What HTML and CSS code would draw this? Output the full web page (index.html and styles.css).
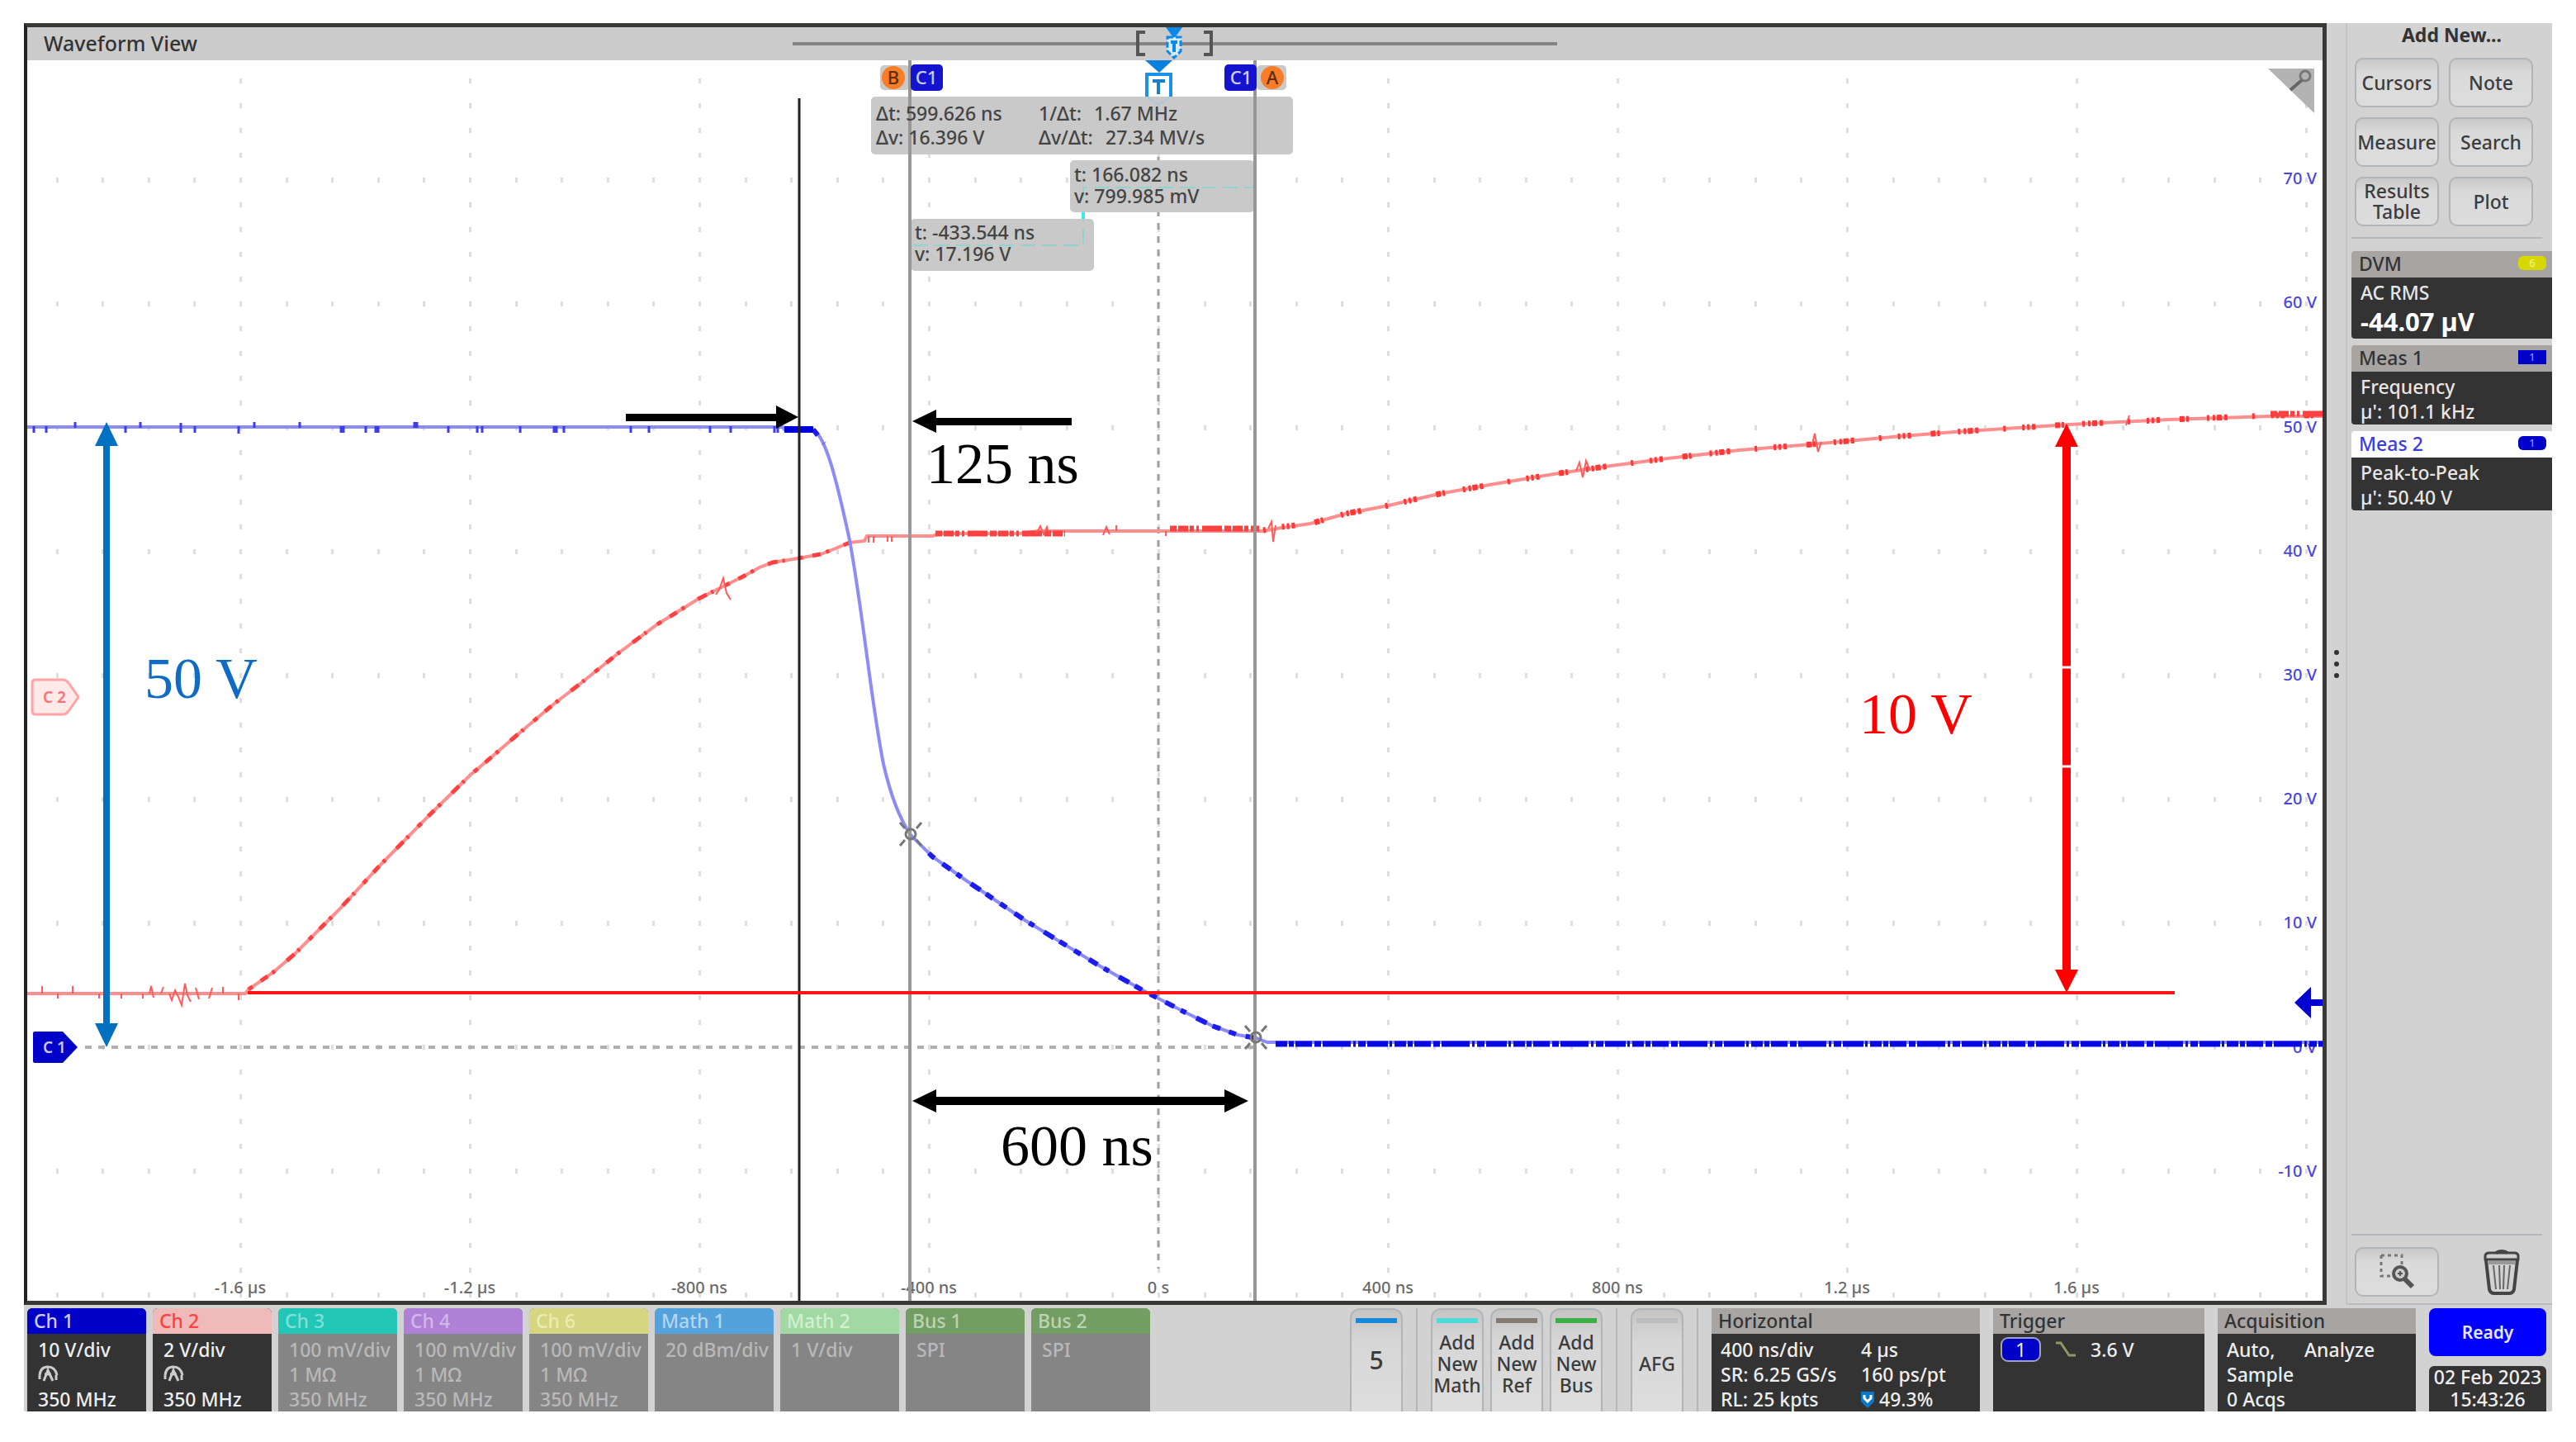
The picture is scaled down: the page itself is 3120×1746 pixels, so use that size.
FILE: index.html
```html
<!DOCTYPE html>
<html lang="en">
<head>
    <meta charset="UTF-8">
    <meta name="viewport" content="width=device-width, initial-scale=1.0">
    <title>Waveform View</title>
    <link rel="stylesheet" href="styles.css">
</head>
<body>
    <div class="scope">
        <div class="work">
            <!-- Waveform window -->
            <main class="wave">
                <div class="wave-title">
                    <span>Waveform View</span>
                    <svg class="overview" width="926" height="40" viewBox="960 33 926 40">
                        <path d="M960 53H1886" stroke="#848484" stroke-width="4"/>
                        <path d="M1387 39h-9v27h9M1458 39h9v27h-9" fill="none" stroke="#555" stroke-width="4"/>
                        <path d="M1412 33h20l-10 14z" fill="#0a8ae8"/>
                        <path d="M1414 45h16v17l-8 8-8-8z" fill="#d8ecf8" stroke="#0a8ae8" stroke-width="3" stroke-dasharray="7 3"/>
                        <path d="M1418 51h8M1422 51v12" stroke="#0a8ae8" stroke-width="4"/>
                    </svg>
                </div>
                <svg class="plot" viewBox="33 73 2780 1502">
                    <defs>
                        <pattern id="grid" x="286" y="62" width="278" height="150" patternUnits="userSpaceOnUse">
                            <g fill="#dedede">
                                <rect x="4" y="3" width="3" height="6"/>
                                <rect x="60" y="3" width="3" height="6"/>
                                <rect x="115" y="3" width="3" height="6"/>
                                <rect x="171" y="3" width="3" height="6"/>
                                <rect x="226" y="3" width="3" height="6"/>
                                <rect x="4" y="33" width="3" height="6"/>
                                <rect x="4" y="63" width="3" height="6"/>
                                <rect x="4" y="93" width="3" height="6"/>
                                <rect x="4" y="123" width="3" height="6"/>
                            </g>
                        </pattern>
                    </defs>
                    <rect x="33" y="90" width="2780" height="1485" fill="url(#grid)"/>
                    <path d="M1403 190V1536" stroke="#a0a0a0" stroke-width="3" stroke-dasharray="8 8"/>
                    <path d="M103 1268H1520" stroke="#b0b0b0" stroke-width="4" stroke-dasharray="8 8"/>

                    <!-- axis labels -->
                    <g class="volts">
                        <text x="2806" y="223">70 V</text>
                        <text x="2806" y="373">60 V</text>
                        <text x="2806" y="524">50 V</text>
                        <text x="2806" y="674">40 V</text>
                        <text x="2806" y="824">30 V</text>
                        <text x="2806" y="974">20 V</text>
                        <text x="2806" y="1124">10 V</text>
                        <text x="2806" y="1275">0 V</text>
                        <text x="2806" y="1425">-10 V</text>
                    </g>
                    <g class="times">
                        <text x="291" y="1566">-1.6 µs</text>
                        <text x="569" y="1566">-1.2 µs</text>
                        <text x="847" y="1566">-800 ns</text>
                        <text x="1125" y="1566">-400 ns</text>
                        <text x="1403" y="1566">0 s</text>
                        <text x="1681" y="1566">400 ns</text>
                        <text x="1959" y="1566">800 ns</text>
                        <text x="2237" y="1566">1.2 µs</text>
                        <text x="2515" y="1566">1.6 µs</text>
                    </g>

                    <!-- channel 2 trace -->
                    <path class="ch2" d="M33 1203H297L301 1198 330 1178 357 1155 411 1101 460 1048 520 987 569 939 596 916 625 891 670 853 700 830 750 790 796 756 846 725 876 710 900 698 920 687 936 681 967 676 994 671 1012 664 1029 657 1047 655 1050 649H1130L1136 646H1235L1257 643H1530L1552 639 1587 634 1630 622 1682 612 1743 598 1804 587 1882 574 1951 564 2020 555 2107 545 2194 538 2281 530 2367 523 2506 514 2628 508 2750 504H2813"/>
                    <path class="ch2-noise" d="M301 1198L330 1178 357 1155 411 1101 460 1048 520 987 569 939 596 916 625 891 670 853 700 830 750 790 796 756 846 725 876 710 900 698 920 687 936 681 967 676 994 671 1012 664 1029 657"/>
                    <path class="ch2-noise wide" d="M1530 642L1552 638 1587 634 1630 622 1682 612 1743 598 1804 587 1882 574 1951 564 2020 555 2107 545 2194 538 2281 530 2367 523 2506 514 2628 508 2750 503H2813"/>
                    <path class="ch2-noise flat" d="M1133 646H1290M1417 640H1525M2750 501H2813"/>
                    <path class="ch2-spikes" d="M51 1203v-9M70 1203v6M88 1203v-9M120 1203v6M147 1203v6M173 1203v6M181 1203l2-9 3 14M195 1203l3-8M205 1203l3 8 4-12 4 8 4 10 4-26 3 14 4 8M237 1196l4 14M253 1209l4-13M270 1203v-8M289 1203v8M867 720l4-6 5-14 4 18 5 8M1052 649v8M1058 649v8M1075 649v7M1080 649v7M1255 646l5-9 4 10 4-9 3 10M1336 648l4-10 4 9M1352 643v-7M1412 643v6M1536 640l4-8 2 24 3-20M1909 570l4-10 4 18 4-20 5 12M2194 541l4-16 4 22 4-12M2575 515l4-12"/>

                    <!-- channel 1 trace -->
                    <path class="ch1" d="M33 517H948L950 520H985C1000 530 1012 575 1029 654C1045 740 1055 850 1070 925C1078 960 1090 992 1103 1011L1129 1037 1170 1066 1241 1114 1331 1169 1384 1199 1430 1223 1468 1242 1499 1253 1522 1257 1535 1262H2813"/>
                    <path class="ch1-noise" d="M985 520L998 537M1125 1033L1129 1037 1170 1066 1241 1114 1331 1169 1384 1199 1430 1223 1468 1242 1499 1253 1522 1257"/>
                    <path d="M950 520h35" stroke="#00d" stroke-width="8"/>
                    <path class="ch1-base" d="M1545 1264H2813"/>
                    <path class="ch1-spikes" d="M41 516v8M56 516v8M91 518v-7M152 516v8M170 518v-7M219 512v12M236 516v8M289 516v9M308 518v-7M363 518v-7M413 516v8M416 516v8M443 516v8M455 516v8M458 516v8M502 518v-7M505 518v-7M543 516v8M578 516v8M584 516v8M630 516v8M671 516v8M674 516v8M683 516v8M764 516v8M786 516v8M860 516v8M885 516v8M938 516v8M942 516v8"/>

                    <!-- readouts -->
                    <g fill="#c9c9c9">
                        <rect x="1055" y="117" width="511" height="70" rx="5"/>
                        <rect x="1296" y="194" width="223" height="63" rx="5"/>
                        <rect x="1103" y="265" width="222" height="63" rx="5"/>
                        <rect x="1066" y="79" width="36" height="30" rx="5"/>
                        <rect x="1522" y="79" width="36" height="30" rx="5"/>
                    </g>
                    <path d="M1106 297H1312V266M1312 240V227H1518" fill="none" stroke="#92d2d0" stroke-width="2" stroke-dasharray="18 8"/>
                    <path d="M1312 257v8" stroke="#3ee8e8" stroke-width="4"/>
                    <path d="M1102 73V1575M1520 73V1575" stroke="#979797" stroke-width="4"/>
                    <g class="readout">
                        <text x="1061" y="146">Δt: 599.626 ns</text>
                        <text x="1061" y="175">Δv: 16.396 V</text>
                        <text x="1258" y="146">1/Δt:</text>
                        <text x="1325" y="146">1.67 MHz</text>
                        <text x="1258" y="175">Δv/Δt:</text>
                        <text x="1339" y="175">27.34 MV/s</text>
                        <text x="1301" y="220">t: 166.082 ns</text>
                        <text x="1301" y="246">v: 799.985 mV</text>
                        <text x="1108" y="290">t: -433.544 ns</text>
                        <text x="1108" y="316">v: 17.196 V</text>
                    </g>

                    <!-- cursors -->
                    <g class="mark">
                        <circle cx="1103" cy="1010" r="6"/>
                        <path d="M1090 996l6 7M1116 996l-6 7M1090 1024l6-7M1116 1024l-6-7"/>
                        <circle cx="1521" cy="1256" r="6"/>
                        <path d="M1508 1242l6 7M1534 1242l-6 7M1508 1270l6-7M1534 1270l-6-7"/>
                    </g>
                    <circle cx="1082" cy="94" r="14" fill="#f97d27"/>
                    <circle cx="1541" cy="94" r="14" fill="#f97d27"/>
                    <rect x="1103" y="78" width="39" height="32" rx="5" fill="#1414cf"/>
                    <rect x="1483" y="78" width="39" height="32" rx="5" fill="#1414cf"/>
                    <g class="tag">
                        <text x="1082" y="102" fill="#5a2c08">B</text>
                        <text x="1541" y="102" fill="#5a2c08">A</text>
                        <text x="1122" y="102" fill="#cfd0ff">C1</text>
                        <text x="1503" y="102" fill="#cfd0ff">C1</text>
                    </g>
                    <path d="M1387 73h33l-16 15z" fill="#0a7fdc"/>
                    <path d="M1389 117V90h29v27" fill="#fff" stroke="#1b92e6" stroke-width="4"/>
                    <path d="M1390 118l13 9 13-9" fill="none" stroke="#a9c8de" stroke-width="2"/>
                    <path d="M1396 98h15M1403 98v16" stroke="#1b7fc8" stroke-width="4"/>
                    <path d="M968 119V1575" stroke="#222" stroke-width="3"/>

                    <!-- markers on the edges -->
                    <path d="M43 823H76Q80 823 83 827L95 844 83 861Q80 865 76 865H43Q39 865 39 861V827Q39 823 43 823z" fill="#ffe9e9" stroke="#ffa3a3" stroke-width="3"/>
                    <path d="M42 1249H76L94 1268 76 1287H42Q40 1287 40 1285V1251Q40 1249 42 1249z" fill="#0000c8"/>
                    <g class="tag small">
                        <text x="66" y="851" fill="#ff7070">C 2</text>
                        <text x="66" y="1275" fill="#c8c8ff">C 1</text>
                    </g>
                    <path d="M2779 1214l20-19v15h14v8h-14v15z" fill="#0000d0"/>
                    <path d="M2747 83h56v54z" fill="#b3b3b3"/>
                    <circle cx="2792" cy="92" r="6" fill="none" stroke="#777" stroke-width="3"/>
                    <path d="M2788 97l-14 12" stroke="#666" stroke-width="4"/>

                    <!-- annotations -->
                    <path d="M300 1202H2634" stroke="#ff1414" stroke-width="4"/>
                    <path d="M129 511l14 29h-10v699h10l-14 29-14-29h10V540h-10z" fill="#0070c0"/>
                    <path d="M2503 513l14 28h-9v633h9l-14 28-14-28h9V541h-9z" fill="#f00"/>
                    <path d="M2496 808h14M2496 928h14" stroke="#fff" stroke-width="3"/>
                    <path d="M758 501h182v-10l27 14-27 14v-9H758zM1298 506h-164v-10l-29 14 29 14v-9h164zM1105 1333l29-14v9h349v-9l29 14-29 14v-9h-349v9z"/>
                    <g class="note">
                        <text x="1122" y="585">125 ns</text>
                        <text x="1212" y="1411">600 ns</text>
                        <text x="175" y="845" fill="#0f6bc4">50 V</text>
                        <text x="2252" y="888" fill="#f00">10 V</text>
                    </g>
                </svg>
            </main>

            <div class="handle"><i></i><i></i><i></i></div>

            <!-- Results bar -->
            <aside class="side">
                <h2>Add New...</h2>
                <div class="add">
                    <button>Cursors</button>
                    <button>Note</button>
                    <button>Measure</button>
                    <button>Search</button>
                    <button>Results Table</button>
                    <button>Plot</button>
                </div>
                <div class="card">
                    <div class="card-head">DVM <b class="chip yellow">6</b></div>
                    <div class="card-body">
                        <p>AC RMS</p>
                        <p class="value">-44.07 µV</p>
                    </div>
                </div>
                <div class="card">
                    <div class="card-head">Meas 1 <b class="chip square">1</b></div>
                    <div class="card-body">
                        <p>Frequency</p>
                        <p>µ': 101.1 kHz</p>
                    </div>
                </div>
                <div class="card">
                    <div class="card-head selected">Meas 2 <b class="chip">1</b></div>
                    <div class="card-body">
                        <p>Peak-to-Peak</p>
                        <p>µ': 50.40 V</p>
                    </div>
                </div>
                <div class="tools">
                    <button class="zoom" aria-label="Zoom">
                        <svg width="44" height="44" viewBox="0 0 44 44" fill="none" stroke="#555">
                            <path d="M3 2h25v14M3 2v25h12" stroke="#777" stroke-width="3" stroke-dasharray="4 4"/>
                            <circle cx="26" cy="24" r="8" fill="#ccc" stroke-width="4"/>
                            <path d="M23 24h6M26 21v6" stroke-width="2"/>
                            <path d="M31 30l10 10" stroke-width="6"/>
                        </svg>
                    </button>
                    <button class="trash" aria-label="Delete">
                        <svg width="46" height="56" viewBox="0 0 46 56" fill="none" stroke="#444">
                            <path d="M16 5q7-4 14 0" stroke-width="4"/>
                            <path d="M3 13V9q0-4 5-4h30q5 0 5 4v4z" stroke-width="3"/>
                            <path d="M4 14l4 35q1 5 6 5h18q5 0 6-5l4-35" stroke-width="4"/>
                            <path d="M7 17h32" stroke="#999" stroke-width="4"/>
                            <path d="M13 20l3 29M20 20l1 29M26 20l-1 29M33 20l-3 29" stroke="#666" stroke-width="2"/>
                        </svg>
                    </button>
                </div>
            </aside>
        </div>

        <!-- Settings bar -->
        <footer class="bar">
            <div class="channels">
                <div class="ch on ch-1">
                    <h3>Ch 1</h3>
                    <p>10 V/div</p>
                    <p><svg width="25" height="22" viewBox="0 0 25 22"><path d="M2 13Q3 3 12 3t11 10M7 20l5-13 6 13M8 12h8M2 13v5M22 13v6" fill="none" stroke="#ccc" stroke-width="3"/></svg></p>
                    <p>350 MHz</p>
                </div>
                <div class="ch on ch-2">
                    <h3>Ch 2</h3>
                    <p>2 V/div</p>
                    <p><svg width="25" height="22" viewBox="0 0 25 22"><path d="M2 13Q3 3 12 3t11 10M7 20l5-13 6 13M8 12h8M2 13v5M22 13v6" fill="none" stroke="#ccc" stroke-width="3"/></svg></p>
                    <p>350 MHz</p>
                </div>
                <div class="ch ch-3">
                    <h3>Ch 3</h3>
                    <p>100 mV/div</p>
                    <p>1 MΩ</p>
                    <p>350 MHz</p>
                </div>
                <div class="ch ch-4">
                    <h3>Ch 4</h3>
                    <p>100 mV/div</p>
                    <p>1 MΩ</p>
                    <p>350 MHz</p>
                </div>
                <div class="ch ch-6">
                    <h3>Ch 6</h3>
                    <p>100 mV/div</p>
                    <p>1 MΩ</p>
                    <p>350 MHz</p>
                </div>
                <div class="ch math-1">
                    <h3>Math 1</h3>
                    <p>20 dBm/div</p>
                </div>
                <div class="ch math-2">
                    <h3>Math 2</h3>
                    <p>1 V/div</p>
                </div>
                <div class="ch bus">
                    <h3>Bus 1</h3>
                    <p>SPI</p>
                </div>
                <div class="ch bus">
                    <h3>Bus 2</h3>
                    <p>SPI</p>
                </div>
            </div>

            <button class="tall five"><i class="blue"></i><span>5</span></button>
            <div class="sep"></div>
            <div class="group">
                <button class="tall"><i class="cyan"></i><span>Add New Math</span></button>
                <button class="tall"><i class="taupe"></i><span>Add New Ref</span></button>
                <button class="tall"><i class="green"></i><span>Add New Bus</span></button>
            </div>
            <div class="sep"></div>
            <button class="tall"><i></i><span>AFG</span></button>
            <div class="sep"></div>

            <div class="info horizontal">
                <h3>Horizontal</h3>
                <div class="cols">
                    <p>400 ns/div</p><p>4 µs</p>
                    <p>SR: 6.25 GS/s</p><p>160 ps/pt</p>
                    <p>RL: 25 kpts</p>
                    <p><svg width="16" height="20" viewBox="0 0 16 20"><path d="M0 0h16v12l-8 8-8-8z" fill="#0a78c8"/><path d="M4 4v4l4 4 4-4V4" fill="none" stroke="#fff" stroke-width="3"/></svg> 49.3%</p>
                </div>
            </div>
            <div class="info trigger">
                <h3>Trigger</h3>
                <div class="level">
                    <b>1</b>
                    <svg width="26" height="20" viewBox="0 0 26 20"><path d="M1 2h6l10 15h8" fill="none" stroke="#8f9860" stroke-width="3"/></svg>
                    <span>3.6 V</span>
                </div>
            </div>
            <div class="info acquisition">
                <h3>Acquisition</h3>
                <div class="cols">
                    <p>Auto,</p><p>Analyze</p>
                    <p>Sample</p><p></p>
                    <p>0 Acqs</p>
                </div>
            </div>
            <div class="status">
                <button class="ready">Ready</button>
                <div class="clock">02 Feb 2023<br>15:43:26</div>
            </div>
        </footer>
    </div>
</body>
</html>
```
FILE: styles.css
```css
* {
    box-sizing: border-box;
}

body {
    margin: 28px 29px;
    background: #fff;
    font-family: "Noto Sans", "Open Sans", sans-serif;
    font-size: 23px;
    font-weight: 500;
    line-height: 30px;
    color: #333;
}

h2, h3, p {
    margin: 0;
}

button {
    font: inherit;
    color: #3c3c3c;
    padding: 0;
}

svg {
    display: block;
}

.scope {
    background: #d2d2d2;
}

.work {
    display: flex;
}

/* waveform window */
.wave {
    flex: 1;
    min-width: 0;
    background: #fff;
    border: 5px solid #3a3835;
    border-left: 4px solid #222;
}

.wave-title {
    display: grid;
    grid-template-columns: 1fr auto 1fr;
    align-items: center;
    height: 40px;
    padding-left: 20px;
    padding-right: 20px;
    background: #cbcbcb;
    font-size: 25px;
}

.wave-title span {
    padding-bottom: 2px;
}

.plot {
    width: 100%;
    height: auto;
}

.plot text {
    font-size: 20px;
    white-space: pre;
}

.volts text {
    text-anchor: end;
    fill: #4646dc;
}

.times text {
    text-anchor: middle;
    fill: #6a6a6a;
}

.plot .readout text {
    font-size: 23px;
    fill: #444;
}

.plot .tag text {
    font-size: 22px;
    text-anchor: middle;
}

.plot .tag.small text {
    font-size: 19px;
    font-weight: 600;
}

.plot .note text {
    font-family: "Liberation Serif", serif;
    font-size: 70px;
    font-weight: 400;
}

.ch1, .ch2, .ch1-noise, .ch2-noise, .ch1-spikes, .ch2-spikes, .ch1-base, .mark {
    fill: none;
}

.ch1 {
    stroke: #8c8cf8;
    stroke-width: 4;
}

.ch1-noise {
    stroke: #1c1cec;
    stroke-width: 6;
    stroke-dasharray: 9 12 12 9 7 14 14 8 10 11;
}

.ch1-base {
    stroke: #0808e0;
    stroke-width: 7;
    stroke-dasharray: 14 2 6 2 20 3 8 2 34 3 3 3 9 2 25 2 3 3;
}

.ch1-spikes {
    stroke: #3c3cf0;
    stroke-width: 3;
}

.ch2 {
    stroke: #ff8f8f;
    stroke-width: 4;
}

.ch2-noise {
    stroke: #ff4040;
    stroke-width: 5;
    stroke-dasharray: 6 12 10 7 4 19 12 6 3 16;
}

.ch2-noise.wide {
    stroke: #ff3636;
    stroke-width: 7;
    stroke-dasharray: 3 20 3 3 3 3 4 24 6 2 3 22 3 4 3 2 6 3 4 30;
}

.ch2-noise.flat {
    stroke-width: 7;
    stroke-dasharray: 8 2 12 2 5 3 3 4 24 3;
}

.ch2-spikes {
    stroke: #ff5a5a;
    stroke-width: 2;
}

.mark {
    stroke: #777;
    stroke-width: 3;
}

/* drag handle between plot and results bar */
.handle {
    flex: none;
    width: 25px;
    display: flex;
    flex-direction: column;
    align-items: center;
    justify-content: center;
    gap: 8px;
    border-right: 2px solid #c4c4c4;
}

.handle i {
    width: 6px;
    height: 6px;
    border-radius: 50%;
    background: #333;
}

/* results bar */
.side {
    flex: none;
    width: 248px;
    padding-left: 5px;
    display: flex;
    flex-direction: column;
    gap: 8px;
    border-bottom: 2px solid #b8bcc0;
}

.side h2 {
    font-size: 23px;
    line-height: 28px;
    height: 34px;
    text-align: center;
}

.add {
    display: grid;
    grid-template-columns: 102px 102px;
    grid-auto-rows: 60px;
    gap: 12px;
    padding: 0 0 13px 4px;
    margin-right: 12px;
    margin-bottom: 7px;
    border-bottom: 2px solid #b4b8bc;
}

.add button, .zoom {
    border: 2px solid #b0b5b9;
    border-radius: 10px;
    background: linear-gradient(#c8c8c8, #dadada 30%, #dcdcdc);
    line-height: 25px;
}

.card-head {
    display: flex;
    justify-content: space-between;
    align-items: center;
    height: 32px;
    padding: 0 7px 3px 9px;
    border-radius: 4px 0 0 0;
    background: #a8a4a2;
}

.card-head.selected {
    background: #fff;
    color: #3c3cdc;
}

.card-body {
    padding: 3px 11px 1px;
    border-radius: 0 0 0 4px;
    background: #333;
    color: #e6e6e6;
}

.card-body .value {
    font-size: 31px;
    font-weight: 700;
    line-height: 40px;
    color: #fff;
}

.chip {
    width: 34px;
    height: 17px;
    border-radius: 6px;
    background: #0000c8;
    color: #aab0ff;
    font-size: 13px;
    font-weight: 400;
    line-height: 17px;
    text-align: center;
}

.chip.square {
    border-radius: 0;
}

.chip.yellow {
    background: #d8d800;
    color: #f4f4a0;
}

.tools {
    display: flex;
    align-items: center;
    justify-content: space-between;
    margin-top: auto;
    margin-right: 12px;
    padding: 14px 26px 8px 4px;
    border-top: 2px solid #b4b8bc;
}

.zoom {
    display: flex;
    align-items: center;
    justify-content: center;
    width: 102px;
    height: 60px;
}

.trash {
    border: 0;
    background: none;
}

/* settings bar */
.bar {
    display: flex;
    gap: 16px;
    height: 129px;
    padding: 4px 7px 0 4px;
}

.bar h3 {
    height: 31px;
    padding-left: 8px;
    font-size: 23px;
    font-weight: 500;
    line-height: 31px;
}

.channels {
    display: flex;
    gap: 8px;
    margin-right: auto;
}

.ch {
    width: 144px;
    border-radius: 6px 6px 0 0;
    background: #858585;
    color: #b9b9b9;
    white-space: nowrap;
}

.ch h3 {
    margin-bottom: 4px;
    border-radius: 6px 6px 0 0;
    color: #dcdcdc;
}

.ch p {
    height: 30px;
    padding-left: 13px;
}

.ch p svg {
    padding-top: 3px;
    height: 25px;
}

.ch.on {
    background: #333;
    color: #eee;
}

.ch-1 h3 { background: #0000c8; color: #ccccff; }
.ch-2 h3 { background: #f0baba; color: #ff4040; }
.ch-3 h3 { background: #22c6b6; color: #7fe0d6; }
.ch-4 h3 { background: #ae80d6; color: #d2b8e8; }
.ch-6 h3 { background: #d6d682; color: #ececb0; }
.math-1 h3 { background: #54a2dc; color: #b4d6f0; }
.math-2 h3 { background: #a2d8a4; color: #d0f0d0; }
.bus h3 { background: #729e64; color: #bcd4b4; }

.group {
    display: flex;
    gap: 8px;
}

.tall {
    width: 64px;
    display: flex;
    flex-direction: column;
    align-items: center;
    border: 2px solid #b0b5b9;
    border-bottom: 0;
    border-radius: 12px 12px 0 0;
    background: linear-gradient(#c4c4c4, #d6d6d6 30%, #dedede);
    line-height: 26px;
}

.tall i {
    width: 50px;
    height: 6px;
    margin-top: 10px;
    background: #bcbcbc;
}

.tall span {
    flex: 1;
    display: flex;
    align-items: center;
    padding-bottom: 10px;
}

.tall.five span {
    font-size: 30px;
    padding-bottom: 18px;
}

.tall .blue { background: #1a88d8; }
.tall .cyan { background: #4edada; }
.tall .taupe { background: #847c70; }
.tall .green { background: #3cae46; }

.sep {
    width: 2px;
    background: #b4b8bc;
}

.info {
    background: #333;
    color: #eee;
    white-space: nowrap;
}

.info h3 {
    margin-bottom: 4px;
    background: #a8a4a2;
    color: #333;
}

.info .cols {
    display: grid;
    grid-auto-rows: 30px;
    padding-left: 11px;
}

.info .cols svg {
    display: inline-block;
    vertical-align: -2px;
}

.horizontal { width: 325px; }
.horizontal .cols { grid-template-columns: 170px 1fr; }
.trigger { width: 256px; }
.acquisition { width: 240px; }
.acquisition .cols { grid-template-columns: 94px 1fr; }

.level {
    display: flex;
    align-items: center;
    gap: 17px;
    padding-left: 9px;
}

.level b {
    width: 49px;
    height: 30px;
    border: 2px solid #a0a0c0;
    border-radius: 9px;
    background: #0000c8;
    font-weight: 400;
    line-height: 26px;
    text-align: center;
}

.status {
    display: flex;
    flex-direction: column;
    gap: 12px;
    width: 142px;
}

.ready {
    height: 58px;
    flex: none;
    border: 0;
    border-radius: 8px;
    background: #0000ff;
    color: #e6e6ff;
    font-size: 21px;
    font-weight: 600;
}

.clock {
    flex: 1;
    border-radius: 6px 6px 0 0;
    background: #333;
    color: #eee;
    line-height: 27px;
    text-align: center;
    white-space: nowrap;
}
```
